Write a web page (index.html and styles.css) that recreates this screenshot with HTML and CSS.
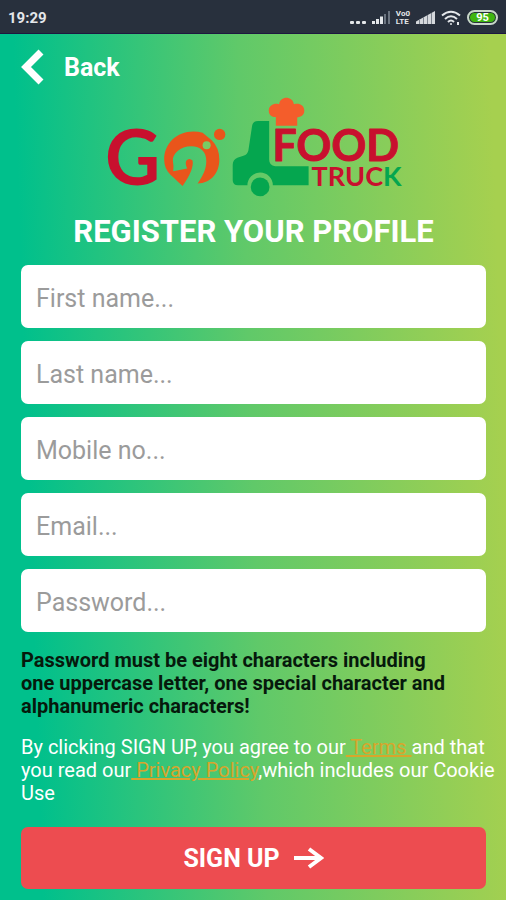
FILE: index.html
```html
<!DOCTYPE html>
<html lang="en">
<head>
<meta charset="utf-8">
<meta name="viewport" content="width=device-width, initial-scale=1">
<title>Register your profile</title>
<link rel="stylesheet" href="styles.css">
</head>
<body>
<div class="status">
  <span class="time">19:29</span>
  <div class="status-icons">
    <svg width="16" height="16" viewBox="0 0 16 16" fill="#e4e7ea"><rect y="11" width="4" height="3" rx="1"/><rect x="6" y="11" width="4" height="3" rx="1"/><rect x="12" y="11" width="4" height="3" rx="1"/></svg>
    <svg width="18" height="16" viewBox="0 0 18 16"><path fill="#e4e7ea" d="M0 11h3v3H0zM4 9h3v5H4zM8 6.500h3V14H8z"/><path fill="#6b7480" d="M12 4h2v10h-2zM16 1h2v13h-2z"/></svg>
    <span class="volte"><span>Vo0</span><span>LTE</span></span>
    <svg width="19" height="16" viewBox="0 0 19 16"><path fill="#d5d8dc" d="M0 11.500 19 1V14H0z"/><path stroke="#7d848e" d="M3.500 9v5M7.500 7v7M11.500 5v9M15.500 3v11"/></svg>
    <svg width="20" height="16" viewBox="0 0 20 16" fill="none" stroke="#e4e7ea" stroke-width="2"><path d="M1 5.500Q10-2 19 5.500M4 9Q10 3.500 16 9M7 12Q10 9 13 12"/><circle cx="10" cy="14" r="1" fill="#e4e7ea" stroke="none"/><path d="M17 12v3"/></svg>
    <span class="battery">95</span>
  </div>
</div>
<main class="screen">
  <button class="back" type="button">
    <svg width="24" height="36" viewBox="0 0 24 36" fill="none" stroke="#fff" stroke-width="7"><path d="M20 3 5 18l15 15"/></svg>
    <span>Back</span>
  </button>
  <svg class="logo" viewBox="100 96 306 102" role="img" aria-label="Go Food Truck">
    <g class="brand">
      <text class="letter-g" x="105" y="185">G</text>
      <text class="food" x="272" y="161">FOOD</text>
      <text class="truck" x="311" y="186">TRUC<tspan class="green">K</tspan></text>
    </g>
    <g transform="translate(95 90) scale(.3333)">
      <path fill="#e9551b" d="M262 287C250 276 239 266 225 253C213 241 207 226 207 208C207 160 244 124 294 124Q309 124 322 128L350 151Q372 173 372 208C372 249 347 278 307 280C319 261 333 240 333 213C333 184 316 168 288 168C255 168 231 191 233 212Q236 226 234 243L276 235Q269 222 273 212Q281 201 292 211Q297 238 262 287Z"/>
      <circle cx="334" cy="165" r="16" fill="#e9551b"/>
      <circle cx="334" cy="165" r="12" fill="#79cc65"/>
      <circle cx="373" cy="133" r="17" fill="#e9551b"/>
    </g>
    <g transform="translate(225 90) scale(.3333)">
      <path fill="#05a64f" d="M131 93H98Q83 93 80 107L69 180Q67 192 54 197L36 203Q22 209 22 224V270Q22 285 38 285H66A38 38 0 0 1 142 285H249V228H149Q131 226 131 208Z"/>
      <circle cx="104" cy="290" r="28" fill="#05a64f"/>
      <path fill="#f45d2b" d="M151 107V81C134 81 129 70 130 59C132 46 146 38 161 43C163 17 202 17 205 43C221 38 235 46 236 60C237 73 230 80 215 82V107Z"/>
    </g>
  </svg>
  <h1>REGISTER YOUR PROFILE</h1>
  <form>
    <input type="text" placeholder="First name..." aria-label="First name">
    <input type="text" placeholder="Last name..." aria-label="Last name">
    <input type="tel" placeholder="Mobile no..." aria-label="Mobile no">
    <input type="email" placeholder="Email..." aria-label="Email">
    <input type="password" placeholder="Password..." aria-label="Password">
    <p class="hint">Password must be eight characters including<br>one uppercase letter, one special character and<br>alphanumeric characters!</p>
    <p class="terms">By clicking SIGN UP, you agree to our<a href="#terms"> Terms </a>and that<br>you read our<a href="#privacy"> Privacy Policy</a>,which includes our Cookie<br>Use</p>
    <button class="signup" type="submit">SIGN UP
      <svg width="30" height="22" viewBox="0 0 30 22" fill="none" stroke="#fff" stroke-width="4"><path d="M0 11h27M15 2l12 9-12 9"/></svg>
    </button>
  </form>
</main>
</body>
</html>
```
FILE: styles.css
```css
* { box-sizing: border-box; }
body {
  margin: 0;
  min-height: 100vh;
  display: flex;
  flex-direction: column;
  font-family: Roboto, "Liberation Sans", sans-serif;
  color: #fff;
}
button, input { font: inherit; border: 0; }
.status {
  height: 34px;
  padding: 2px 8px 0;
  display: flex;
  align-items: center;
  justify-content: space-between;
  background: #28303d;
  border-bottom: 1px solid #1d1740;
}
.time { font-size: 15px; font-weight: 700; color: #e4e7ea; }
.status-icons { display: flex; align-items: center; gap: 6px; }
.volte {
  display: flex;
  flex-direction: column;
  font-size: 8px;
  line-height: 8px;
  font-weight: 700;
  color: #e4e7ea;
}
.battery {
  width: 31px;
  height: 15px;
  border: 2px solid #c9d5cb;
  border-radius: 8px;
  background: #3fb50f;
  box-shadow: inset 0 0 0 1px #28303d;
  font-size: 11px;
  line-height: 11px;
  font-weight: 700;
  text-align: center;
}
.screen {
  flex: 1;
  padding: 14px 20px 10px 21px;
  display: flex;
  flex-direction: column;
  background: linear-gradient(88deg, #00c08c 8%, #60c969 50%, #a6d04f 97%);
}
.back {
  align-self: flex-start;
  display: flex;
  align-items: center;
  gap: 19px;
  padding: 0;
  background: none;
  color: inherit;
  font-size: 25px;
  font-weight: 700;
  line-height: 36px;
}
.back span { padding-top: 2px; }
.logo { width: 66%; margin-top: 10px; align-self: center; overflow: visible; }
.brand { font-family: Lato, sans-serif; font-weight: 700; fill: #c8102e; stroke-linejoin: round; }
.letter-g { font-size: 76px; }
.food { font-size: 43px; stroke: #c8102e; stroke-width: 1px; }
.truck { font-size: 27px; }
.green { fill: #05a64f; }
h1 {
  margin: 15px 0 14px;
  font-size: 31px;
  line-height: 38px;
  font-weight: 700;
  text-align: center;
}
form { display: flex; flex-direction: column; gap: 13px; }
input {
  width: 100%;
  height: 63px;
  padding: 4px 15px 0;
  border-radius: 7px;
  background: #fff;
  color: #333;
  font-size: 25px;
}
input::placeholder { color: #9b9b9b; opacity: 1; }
p { margin: 0; font-size: 20px; line-height: 23px; white-space: nowrap; }
.hint { margin-top: 4px; font-weight: 700; color: #06190c; }
.terms { margin-top: 5px; }
.terms a { color: #d8a52c; }
.signup {
  height: 62px;
  margin-top: 9px;
  border-radius: 7px;
  background: #ed4c50;
  color: #fff;
  font-size: 25px;
  font-weight: 700;
  display: flex;
  align-items: center;
  justify-content: center;
  gap: 14px;
}
```
